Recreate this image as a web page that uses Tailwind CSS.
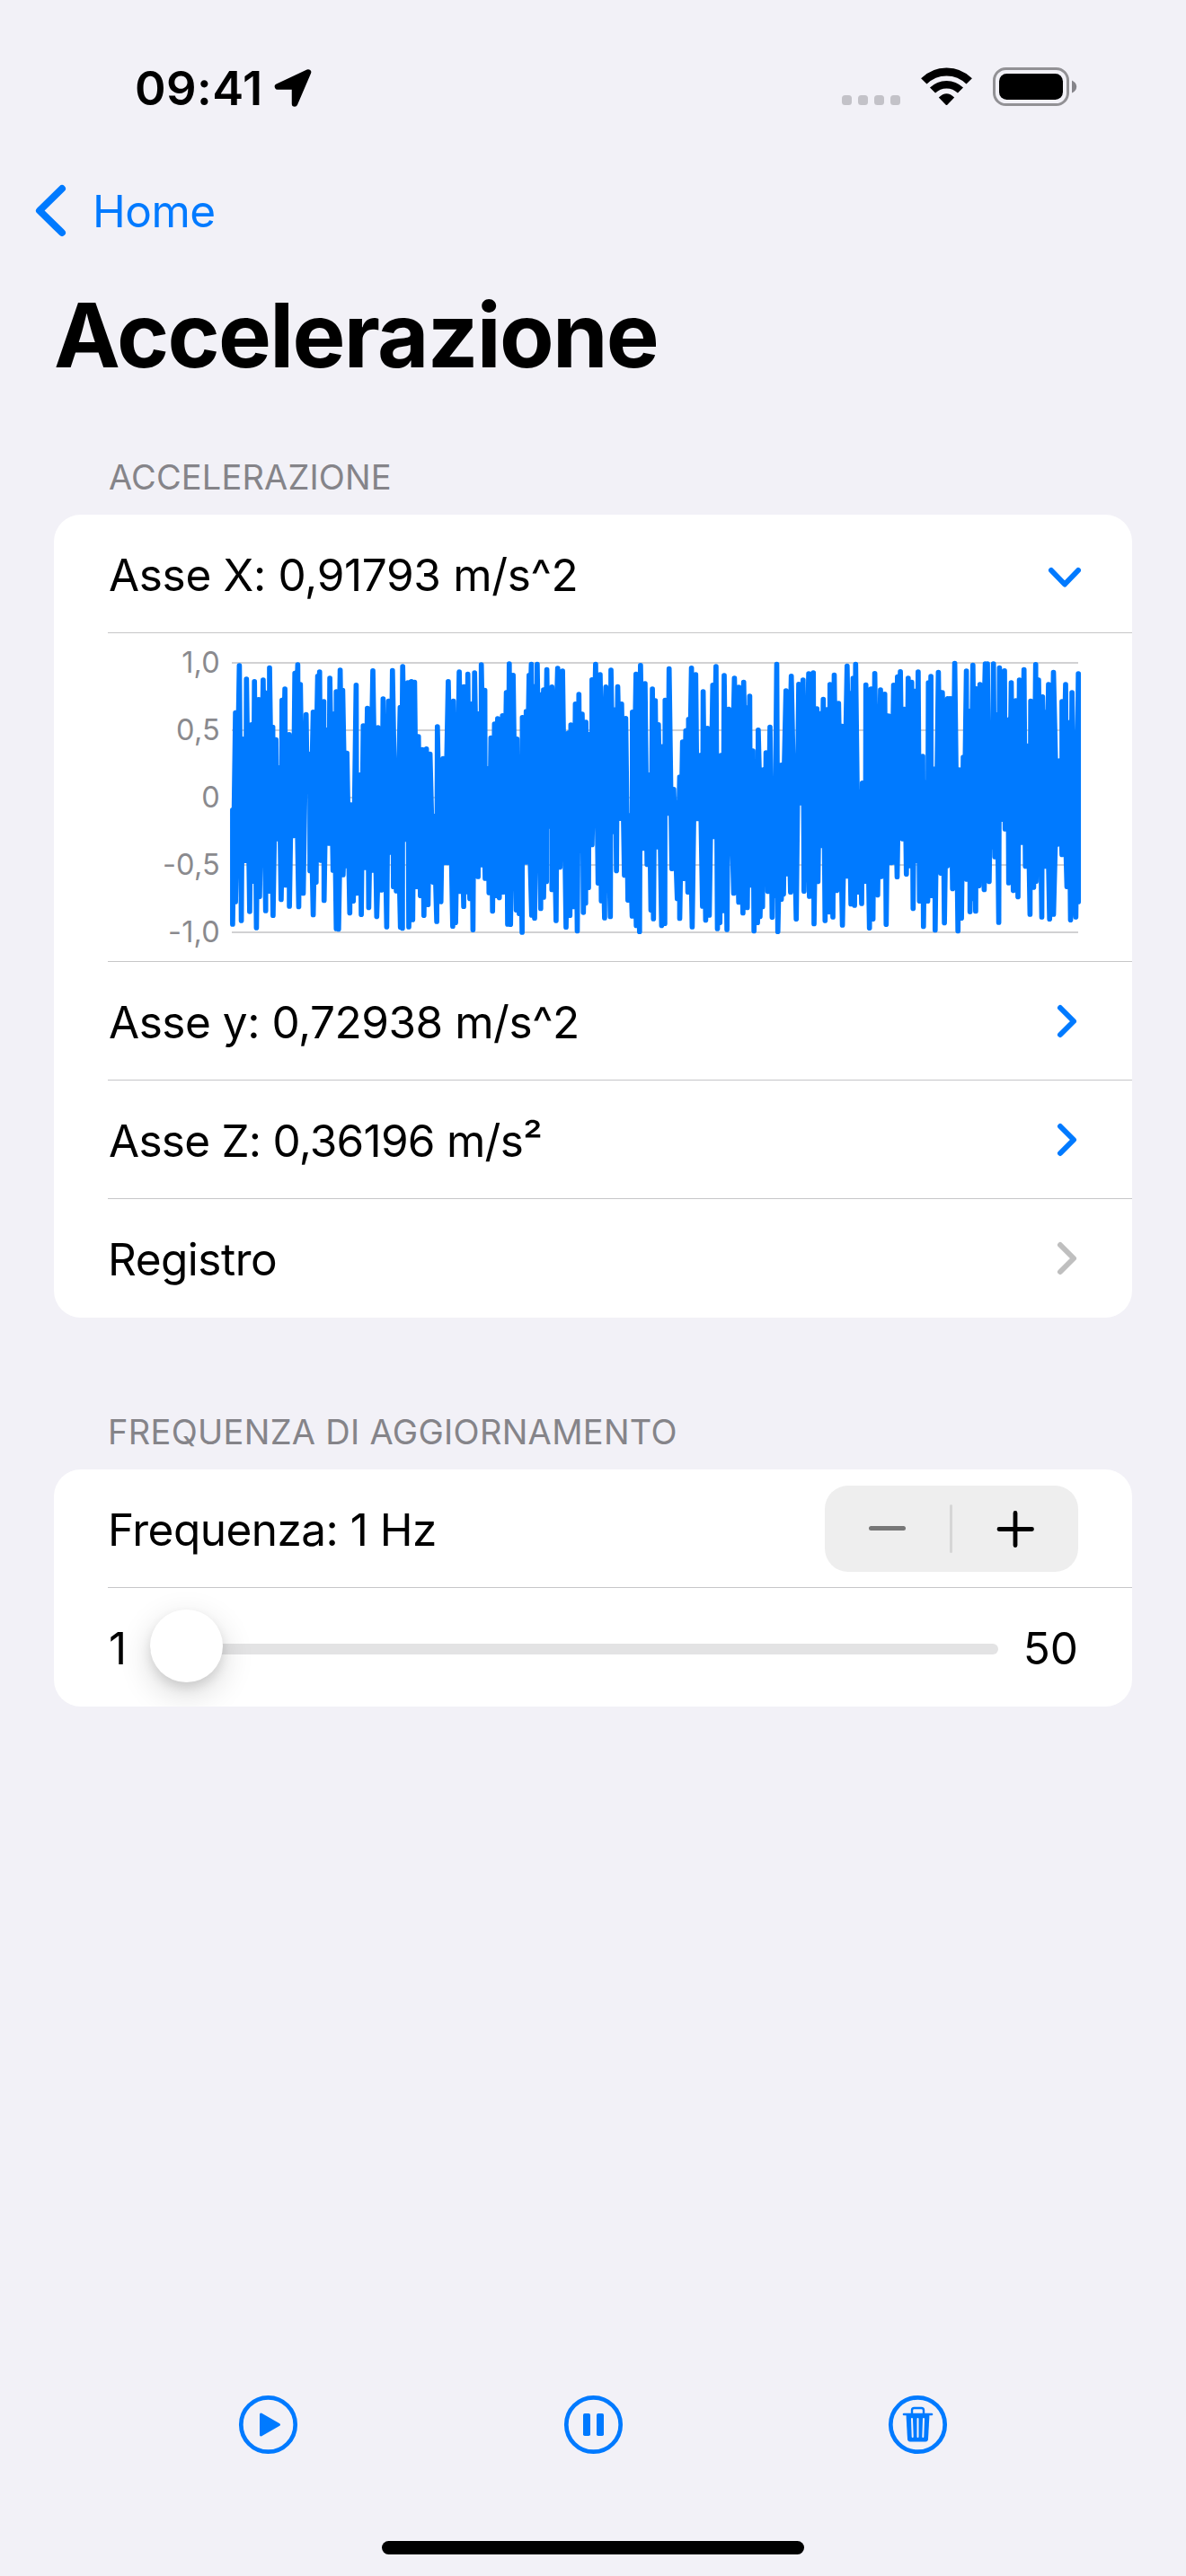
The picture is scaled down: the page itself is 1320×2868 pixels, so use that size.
<!DOCTYPE html>
<html lang="it">
<head>
<meta charset="utf-8">
<title>Accelerazione</title>
<script src="https://cdn.jsdelivr.net/npm/@tailwindcss/browser@4"></script>
</head>
<body class="bg-[#f2f1f7]">
<div class="w-[1320px] h-[2868px] bg-[#f2f1f7] font-['Inter',sans-serif] text-black flex flex-col overflow-hidden">

  <!-- Status bar -->
  <header class="h-[168px] shrink-0 flex items-start justify-between pt-[62px] pl-[150px] pr-[120px]">
    <div class="flex items-start h-[72px]">
      <span class="text-[52.5px] leading-[72px] tracking-[0.44px] font-semibold whitespace-nowrap w-[154px]">09:41</span>
      <svg class="w-[44px] h-[44px] mt-[14px]" viewBox="304 76 44 44"><path d="M343 80.500 L309 96.500 L327 96.500 L328 97.500 L328 115.500 Z" fill="#000" stroke="#000" stroke-width="6.500" stroke-linejoin="round"/></svg>
    </div>
    <svg class="w-[264px] h-[46px] mt-[11px]" viewBox="936 73 264 46">
      <g fill="#c3c2c8">
        <rect x="937" y="106" width="11" height="11" rx="3.500"/><rect x="955" y="106" width="11" height="11" rx="3.500"/><rect x="973" y="106" width="11" height="11" rx="3.500"/><rect x="991" y="106" width="11" height="11" rx="3.500"/>
      </g>
      <g fill="none" stroke="#000">
        <path d="M1028.300 90.400 A35.500 35.500 0 0 1 1078.700 90.400" stroke-width="9"/>
        <path d="M1038 100.600 A21.800 21.800 0 0 1 1069 100.600" stroke-width="8.500"/>
      </g>
      <path d="M1044.800 108.500 Q1053.500 100 1062.200 108.500 L1054.500 116.500 Q1053.500 117.500 1052.500 116.500 Z"/>
      <rect x="1106.500" y="76.500" width="82" height="40" rx="13" fill="none" stroke="#929195" stroke-width="3"/>
      <rect x="1112" y="82" width="71" height="29" rx="8.500"/>
      <path d="M1193 89.500 Q1198.200 92 1198.200 96.500 Q1198.200 101 1193 103.500 Z" fill="#85848a"/>
    </svg>
  </header>

  <!-- Navigation -->
  <nav class="h-[132px] shrink-0 flex items-center pl-[38px] text-[#007aff]">
    <svg class="w-[38px] h-[60px]" viewBox="38 204 38 60"><path d="M69 210 L44 234.500 L69 259" fill="none" stroke="currentColor" stroke-width="8" stroke-linecap="round" stroke-linejoin="round"/></svg>
    <span class="ml-[27px] pt-[3px] text-[49.500px] tracking-[-0.54px] leading-none whitespace-nowrap">Home</span>
  </nav>
  <h1 class="h-[146px] shrink-0 pl-[60px] text-[99px] leading-[146px] tracking-[-1.700px] font-bold whitespace-nowrap">Accelerazione</h1>

  <!-- Acceleration section -->
  <h2 class="h-[127px] shrink-0 pl-[121px] pt-[61px] text-[38px] leading-[48px] tracking-[0.140px] text-[#858489] whitespace-nowrap">ACCELERAZIONE</h2>
  <section class="mx-[60px] h-[894px] shrink-0 bg-white rounded-[30px] pl-[60px] flex flex-col overflow-hidden">
    <div class="h-[132px] border-b border-[#c6c6c8] flex items-center justify-between pr-[55px]">
      <span class="pl-px pt-[2px] text-[49.500px] leading-[60px] tracking-[-0.340px] whitespace-nowrap">Asse X: 0,91793 m/s^2</span>
      <svg class="w-[40px] h-[26px] mt-[8px]" viewBox="1165 630 40 26"><path d="M1170 635 L1185 650.500 L1200 635" fill="none" stroke="#007aff" stroke-width="6" stroke-linecap="round" stroke-linejoin="round"/></svg>
    </div>
    <div class="h-[366px] border-b border-[#c6c6c8] flex">
      <div class="w-[125px] flex flex-col items-end text-[32.500px] leading-[75px] tracking-[0.200px] text-[#8a8a8e]">
        <span class="-mt-[5px]">1,0</span><span>0,5</span><span>0</span><span>-0,5</span><span>-1,0</span>
      </div>
      <svg class="w-[960px] h-[365px] ml-[5px]" viewBox="250 705 960 365">
        <path d="M258 738H1200M258 813H1200M258 888H1200M258 963H1200M258 1038H1200" stroke="#d1d1d3" stroke-width="2"/>
        <path id="wave" fill="none" stroke="#007aff" stroke-width="5.700" stroke-linecap="round" stroke-linejoin="round"/>
      </svg>
    </div>
    <div class="h-[132px] border-b border-[#c6c6c8] flex items-center justify-between pr-[60px]">
      <span class="pl-px pt-[2px] text-[49.500px] leading-[60px] tracking-[-0.470px] whitespace-nowrap">Asse y: 0,72938 m/s^2</span>
      <svg class="w-[26px] h-[40px]" viewBox="1174 1117 26 40"><path d="M1180 1122 L1195 1137 L1180 1152" fill="none" stroke="#007aff" stroke-width="6" stroke-linecap="round" stroke-linejoin="round"/></svg>
    </div>
    <div class="h-[132px] border-b border-[#c6c6c8] flex items-center justify-between pr-[60px]">
      <span class="pl-px pt-[2px] text-[49.500px] leading-[60px] tracking-[-0.760px] whitespace-nowrap">Asse Z: 0,36196 m/s²</span>
      <svg class="w-[26px] h-[40px]" viewBox="1174 1117 26 40"><path d="M1180 1122 L1195 1137 L1180 1152" fill="none" stroke="#007aff" stroke-width="6" stroke-linecap="round" stroke-linejoin="round"/></svg>
    </div>
    <div class="h-[132px] flex items-center justify-between pr-[60px]">
      <span class="pt-[2px] text-[49.500px] leading-[60px] tracking-[-0.500px] whitespace-nowrap">Registro</span>
      <svg class="w-[26px] h-[40px]" viewBox="1174 1117 26 40"><path d="M1180 1122 L1195 1137 L1180 1152" fill="none" stroke="#bfbfbf" stroke-width="6" stroke-linecap="round" stroke-linejoin="round"/></svg>
    </div>
  </section>

  <!-- Update rate section -->
  <h2 class="h-[169px] shrink-0 pl-[120px] pt-[103px] text-[38px] leading-[48px] tracking-[0.300px] text-[#858489] whitespace-nowrap">FREQUENZA DI AGGIORNAMENTO</h2>
  <section class="mx-[60px] h-[264px] shrink-0 bg-white rounded-[30px] pl-[60px] flex flex-col overflow-hidden">
    <div class="h-[132px] border-b border-[#c6c6c8] flex items-center justify-between pr-[60px]">
      <span class="pt-[2px] text-[49.500px] leading-[60px] tracking-[-0.520px] whitespace-nowrap">Frequenza: 1 Hz</span>
      <svg class="w-[282px] h-[96px] rounded-[26px] bg-[#eeeeee]" viewBox="918 1654 282 96" fill="none" stroke-linecap="round">
        <path d="M969.500 1701.500H1005.500" stroke="#777" stroke-width="5"/>
        <rect x="1057" y="1675" width="3" height="54" rx="1.500" fill="#d6d6d6"/>
        <path d="M1112 1702.500H1148.500M1130 1684.500V1720.500" stroke="#000" stroke-width="4.800"/>
      </svg>
    </div>
    <div class="h-[132px] flex items-center pr-[60px]">
      <span class="w-[47px] pl-px pt-[2px] text-[49.500px] leading-[60px]">1</span>
      <div class="relative w-[944px] h-[12px] mt-[4px] rounded-full bg-[#e3e3e4]">
        <div class="absolute left-0 -top-[38px] w-[81px] h-[81px] rounded-full bg-white shadow-[0_12px_36px_rgba(0,0,0,0.16),0_6px_12px_rgba(0,0,0,0.10)]"></div>
      </div>
      <span class="ml-auto pt-[2px] text-[49.500px] leading-[60px]">50</span>
    </div>
  </section>

  <!-- Toolbar -->
  <footer class="mt-auto h-[203px] shrink-0 flex flex-col items-center">
    <div class="w-full flex justify-between pl-[264px] pr-[264px] text-[#007aff]">
      <svg class="w-[69px] h-[69px]" viewBox="264 2665 69 69"><circle cx="298.500" cy="2699.500" r="30.200" fill="none" stroke="currentColor" stroke-width="4.700"/><path d="M290.500 2688 L310.500 2699.500 L290.500 2711 Z" fill="currentColor" stroke="currentColor" stroke-width="3" stroke-linejoin="round"/></svg>
      <svg class="w-[69px] h-[69px]" viewBox="625 2665 69 69"><circle cx="659.500" cy="2699.500" r="30.200" fill="none" stroke="currentColor" stroke-width="4.700"/><rect x="648" y="2687" width="8" height="25" rx="1.800" fill="currentColor"/><rect x="663" y="2687" width="8" height="25" rx="1.800" fill="currentColor"/></svg>
      <svg class="w-[69px] h-[69px]" viewBox="987 2665 69 69"><circle cx="1021.500" cy="2699.500" r="30.200" fill="none" stroke="currentColor" stroke-width="4.700"/><path d="M1006 2688H1037" stroke="currentColor" stroke-width="2.600" stroke-linecap="round"/><path d="M1015 2688V2683.500Q1015 2681 1017.500 2681H1025.500Q1028 2681 1028 2683.500V2688" fill="none" stroke="currentColor" stroke-width="2.400"/><path fill="currentColor" d="M1008.500 2688H1034.500L1033 2715.500Q1032.800 2718.500 1030 2718.500H1013Q1010.200 2718.500 1010 2715.500Z"/><path d="M1015 2693L1015.700 2713M1021.500 2693V2713M1028 2693L1027.300 2713" stroke="#f2f1f7" stroke-width="2" stroke-linecap="round"/></svg>
    </div>
    <div class="w-[470px] h-[15px] mt-[95px] rounded-full bg-black"></div>
  </footer>
</div>

<script>
// Signal samples: "x,y" pairs for the crests and the troughs, in two recording blocks.
const blocks = [
  { x0: 160, sx: 2.8, y0: 700,
    hi: "277,597 286,272 298,115 308,360 320,160 336,312 345,168 358,228 372,163 381,206 392,122 402,320 412,362 422,456 431,230 440,193 453,345 461,447 471,140 480,112 488,178 498,335 506,278 518,410 528,270 542,150 548,136 561,235 570,330 580,157 591,277 600,202 612,130 620,197 633,407 645,580 662,180 673,480 684,316 697,257 714,132 730,322 738,505 746,226 763,233 775,131 789,432 799,254 807,118 823,172 834,168 844,170 856,352 868,395 881,393 892,410 904,617 915,319 933,425 949,168 965,233 983,136 998,185 1010,143 1020,243 1031,139 1043,276 1052,112 1063,197 1073,459 1082,356 1093,310 1103,292 1118,282 1130,205 1139,109 1151,147 1163,360 1172,527 1180,288 1192,268 1201,147 1208,110 1217,185 1226,110 1238,212 1246,196 1256,128 1272,186 1290,124 1305,133 1315,440 1323,340 1331,313 1345,243 1356,211 1366,277 1378,304 1388,345 1397,162 1408,110 1422,145 1440,186 1456,130 1469,262 1477,185 1489,243 1502,291 1513,615 1523,270 1534,143 1548,114 1562,175",
    lo: "277,995 286,920 293,825 304,983 318,783 330,953 341,852 351,1007 361,903 371,720 380,950 392,885 403,966 415,710 428,913 442,865 454,935 466,700 483,937 497,892 509,528 518,817 528,964 537,855 545,650 552,782 562,916 577,725 590,815 600,1010 607,1012 621,830 630,800 642,958 653,918 664,892 678,963 690,806 701,940 712,815 726,970 741,881 757,1004 769,755 778,870 787,884 800,1005 806,1009 816,712 826,1004 838,980 851,870 862,900 873,966 886,930 896,806 902,855 913,986 926,920 938,790 946,790 953,665 963,1002 972,990 986,886 997,936 1008,887 1016,910 1026,1014 1042,836 1052,797 1064,842 1076,890 1087,952 1098,900 1108,907 1120,888 1134,995 1143,996 1152,850 1161,948 1170,960 1179,1022 1191,788 1209,965 1218,975 1237,943 1246,905 1255,853 1262,668 1272,880 1285,983 1297,805 1304,680 1316,1005 1328,966 1340,937 1351,1018 1360,750 1370,956 1377,925 1386,873 1397,730 1405,643 1416,858 1426,917 1436,974 1454,970 1464,686 1473,817 1486,642 1498,832 1509,915 1522,968 1535,1000 1545,1020 1557,742" },
  { x0: 700, sx: 2.529, y0: 560,
    hi: "57,900 66,613 74,652 83,732 89,867 95,805 102,650 113,545 126,948 135,993 143,907 151,790 160,752 168,714 176,543 188,565 200,835 209,622 221,744 229,792 236,600 245,538 253,938 259,835 268,568 281,680 297,577 309,607 323,590 333,675 340,637 349,820 356,1030 364,750 378,883 386,826 397,740 407,975 416,530 429,867 442,619 457,570 469,940 478,597 490,583 506,562 519,559 529,679 538,695 547,647 557,682 566,598 578,566 590,661 600,737 614,536 624,627 631,577 638,530 649,958 657,927 667,599 681,613 692,561 708,616 720,630 731,703 738,810 745,600 756,572 764,555 775,680 786,577 796,590 805,620 814,556 827,838 834,925 843,592 850,571 861,880 871,557 882,625 897,645 905,645 917,527 930,883 941,841 950,553 960,686 968,533 978,612 988,598 1003,529 1009,529 1018,915 1026,529 1035,700 1043,542 1057,552 1067,716 1076,592 1089,652 1099,583 1112,548 1121,803 1131,653 1145,531 1153,583 1164,639 1173,690 1181,598 1195,557 1205,903 1212,853 1219,655 1229,598 1238,725 1247,625 1256,825 1265,562",
    lo: "51,1216 62,1368 69,1397 79,1157 92,1420 101,1413 110,1045 121,1230 136,1330 143,1396 154,1263 166,1308 178,1424 192,1063 207,1355 216,1402 226,1385 237,1123 249,1430 256,1410 265,1370 276,1433 287,1155 295,1312 309,1342 321,1378 333,1360 342,1285 352,1438 362,1410 369,1390 376,1357 383,1240 391,1306 403,1392 410,1320 419,1440 429,1332 435,1315 445,1247 455,1308 471,1398 484,1010 493,1305 508,1322 521,1414 532,1273 541,1153 552,1403 564,1375 574,1391 585,1303 601,1418 613,1255 625,1348 635,1352 646,1308 655,1346 666,1272 677,1428 687,1398 700,1318 710,1256 724,1416 738,1210 746,1208 755,1257 770,1130 781,1248 791,1220 800,1363 810,1203 818,1338 829,1423 841,1338 851,1320 862,1435 878,1245 888,1411 896,1220 902,1030 911,1297 926,1438 936,1395 944,1083 951,1265 960,1374 968,1330 976,1372 985,1287 991,1168 1000,1300 1014,1273 1022,1157 1030,1190 1041,1409 1051,1065 1059,1097 1069,1277 1082,1303 1095,1324 1105,1142 1116,1222 1129,1382 1139,1292 1146,1272 1154,1170 1162,1391 1173,1222 1184,1398 1195,1382 1206,1148 1219,1183 1233,1290 1243,1401 1258,1391 1265,1340" }
];
const read = (key, shift) => blocks.flatMap(b => b[key].split(" ").map(p => {
  const [x, y] = p.split(",").map(Number);
  return [b.x0 + x / b.sx, b.y0 + y / 3 + shift];
}));
const hi = read("hi", 2.8), lo = read("lo", -2.8);
// Every extreme is joined to its neighbours on the opposite side.
const join = (from, to) => from.map(p => {
  const before = to.filter(q => q[0] <= p[0]).pop() || to[0];
  const after = to.find(q => q[0] > p[0]) || to[to.length - 1];
  return "M" + [before, p, after].map(q => q[0].toFixed(1) + " " + q[1].toFixed(1)).join("L");
}).join("");
document.getElementById("wave").setAttribute("d", join(hi, lo) + join(lo, hi));
</script>
</body>
</html>
